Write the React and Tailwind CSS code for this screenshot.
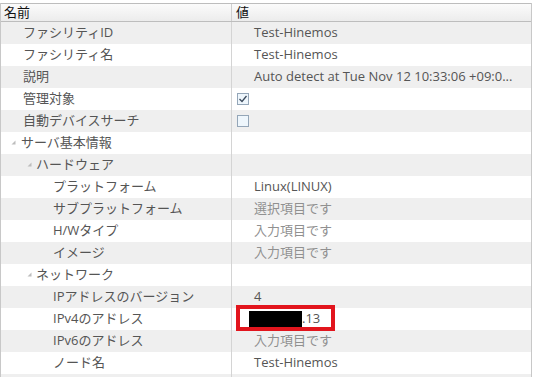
const rows = [
  { label: 'ファシリティID', indent: 22, value: 'Test-Hinemos' },
  { label: 'ファシリティ名', indent: 22, value: 'Test-Hinemos' },
  { label: '説明', indent: 22, value: 'Auto detect at Tue Nov 12 10:33:06 +09:0...' },
  { label: '管理対象', indent: 22, check: true },
  { label: '自動デバイスサーチ', indent: 22, check: false },
  { label: 'サーバ基本情報', indent: 20, arrow: 10 },
  { label: 'ハードウェア', indent: 35, arrow: 26 },
  { label: 'プラットフォーム', indent: 52, value: 'Linux(LINUX)' },
  { label: 'サブプラットフォーム', indent: 52, value: '選択項目です', hint: true },
  { label: 'H/Wタイプ', indent: 52, value: '入力項目です', hint: true },
  { label: 'イメージ', indent: 52, value: '入力項目です', hint: true },
  { label: 'ネットワーク', indent: 35, arrow: 26 },
  { label: 'IPアドレスのバージョン', indent: 52, value: '4' },
  { label: 'IPv4のアドレス', indent: 52, ip: true },
  { label: 'IPv6のアドレス', indent: 52, value: '入力項目です', hint: true },
  { label: 'ノード名', indent: 52, value: 'Test-Hinemos' },
];

const Arrow = () => (
  <svg width="5" height="5" viewBox="0 0 5 5" className="shrink-0">
    <path d="M4.5 0.5 L4.5 4.5 L0.5 4.5 Z" fill="#bdbdbd" />
  </svg>
);

const CheckBox = ({ checked }) => (
  <div className="w-[12px] h-[12px] border border-[#94a6b8] bg-[#eef6fc] flex items-center justify-center">
    {checked && (
      <svg width="10" height="10" viewBox="0 0 10 10">
        <path d="M1.5 5 L4 7.5 L8.5 2" fill="none" stroke="#3b4a5c" strokeWidth="1.3" />
      </svg>
    )}
  </div>
);

export default function App() {
  return (
    <div
      className="w-[534px] h-[377px] overflow-hidden bg-white pt-[3px] text-[13px]"
      style={{ fontFamily: '"Open Sans", "Noto Sans CJK JP", sans-serif' }}
    >
      <div className="w-[532px] border-r border-l border-[#c8c8c8]">
        {/* header */}
        <div className="flex h-[19px] border-t border-b border-[#bdbdbd] bg-gradient-to-b from-[#fbfbfb] to-[#ececec] text-[#111] leading-none">
          <div className="w-[231px] border-r border-[#cfcfcf] pl-[3px] flex items-center">名前</div>
          <div className="flex-1 pl-[4px] flex items-center">値</div>
        </div>

        {rows.map((r, i) => (
          <div
            key={i}
            className={`flex h-[22px] ${i % 2 === 0 ? 'bg-[#efefef]' : 'bg-white'} text-[#555]`}
          >
            <div className="w-[231px] border-r border-[#d4d4d4] relative flex items-center">
              {r.arrow && (
                <span className="absolute top-[8px]" style={{ left: r.arrow }}>
                  <Arrow />
                </span>
              )}
              <span style={{ paddingLeft: r.indent }} className="whitespace-nowrap">
                {r.label}
              </span>
            </div>
            <div className="flex-1 flex items-center relative">
              {r.value && (
                <span className={`pl-[22px] whitespace-nowrap ${r.hint ? 'text-[#909090]' : ''}`}>
                  {r.value}
                </span>
              )}
              {r.check !== undefined && (
                <span className="pl-[5px]">
                  <CheckBox checked={r.check} />
                </span>
              )}
              {r.ip && (
                <>
                  <span className="pl-[17px] flex items-center">
                    <span className="w-[53px] h-[16px] bg-black" />
                    <span>.13</span>
                  </span>
                  <div className="absolute left-[4px] top-[-3px] w-[99px] h-[26px] border-[4px] border-[#e2151d]" />
                </>
              )}
            </div>
          </div>
        ))}
        <div className="flex h-[6px] bg-[#efefef]">
          <div className="w-[231px] border-r border-[#d4d4d4]" />
        </div>
      </div>
    </div>
  );
}
